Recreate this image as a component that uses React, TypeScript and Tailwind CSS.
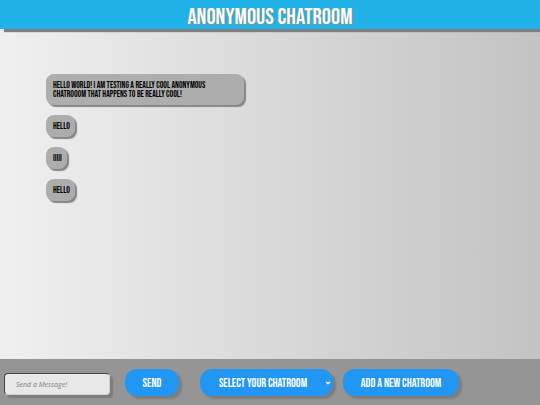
import React from 'react';
import { ChevronDown } from 'lucide-react';

interface Message {
  id: number;
  text: string;
}

const messages: Message[] = [
  { id: 1, text: 'Hello world! I am testing a really cool anonymous chatrooom that happens to be really cool!' },
  { id: 2, text: 'Hello' },
  { id: 3, text: 'IIIII' },
  { id: 4, text: 'Hello' },
];

const MessageBubble: React.FC<{ message: Message }> = ({ message }) => (
  <li className="max-w-[198px] rounded-lg bg-[#adadad] pt-[7px] pr-[5px] pb-[6px] pl-[7px] text-[9px] leading-[9px] text-balance uppercase text-black shadow-[2px_2px_1px_#868686]">
    {message.text}
  </li>
);

export default function App() {
  return (
    <div className="flex min-h-screen flex-col bg-linear-to-r from-[#f0f0f0] to-[#c3c3c3] font-['Bebas_Neue','Liberation_Sans_Narrow','Liberation_Sans',sans-serif]">
      <header className="flex h-[29px] items-center justify-center bg-[#21b2e8] shadow-[4px_3px_1px_#808080]">
        <h1 className="pt-[4px] text-[23px] leading-[24px] uppercase text-white [text-shadow:1px_1px_1px_#888]">
          Anonymous Chatroom
        </h1>
      </header>

      <main className="flex-1 px-[46px] pt-[45px]">
        <ul className="flex flex-col items-start gap-[10px]">
          {messages.map(message => (
            <MessageBubble key={message.id} message={message} />
          ))}
        </ul>
      </main>

      <footer className="flex h-[46px] items-center bg-[#959595] pl-[4px]">
        <input
          type="text"
          aria-label="Message"
          placeholder="Send a Message!"
          className="mt-[4px] h-[22px] w-[106px] rounded-[4px] border border-[#d0d0d0] border-t-[#444] border-l-[#444] bg-[#e8e8e8] px-[11px] font-['Open_Sans',sans-serif] text-[7px] text-[#222] italic shadow-[3px_3px_1px_#7d7d7d] outline-none placeholder:text-[#808080]"
        />
        <button
          type="button"
          className="ml-[15px] h-[27px] w-[54px] rounded-[12px] bg-[#2196f3] pt-[3px] text-[12px] uppercase text-white shadow-[3px_3px_2px_#7d7d7d]"
        >
          Send
        </button>
        <div className="relative ml-[21px]">
          <select
            aria-label="Select your chatroom"
            className="h-[27px] w-[133px] appearance-none rounded-[12px] bg-[#2196f3] pt-[3px] pr-[7px] text-center text-[12px] uppercase text-white shadow-[3px_3px_2px_#7d7d7d] outline-none"
          >
            <option>Select your chatroom</option>
          </select>
          <ChevronDown className="pointer-events-none absolute top-[11px] right-[2px] text-white" size={6} strokeWidth={5} />
        </div>
        <button
          type="button"
          className="ml-[10px] h-[27px] w-[116px] rounded-[12px] bg-[#2196f3] pt-[3px] text-[12px] uppercase text-white shadow-[3px_3px_2px_#7d7d7d]"
        >
          Add a new chatroom
        </button>
      </footer>
    </div>
  );
}
